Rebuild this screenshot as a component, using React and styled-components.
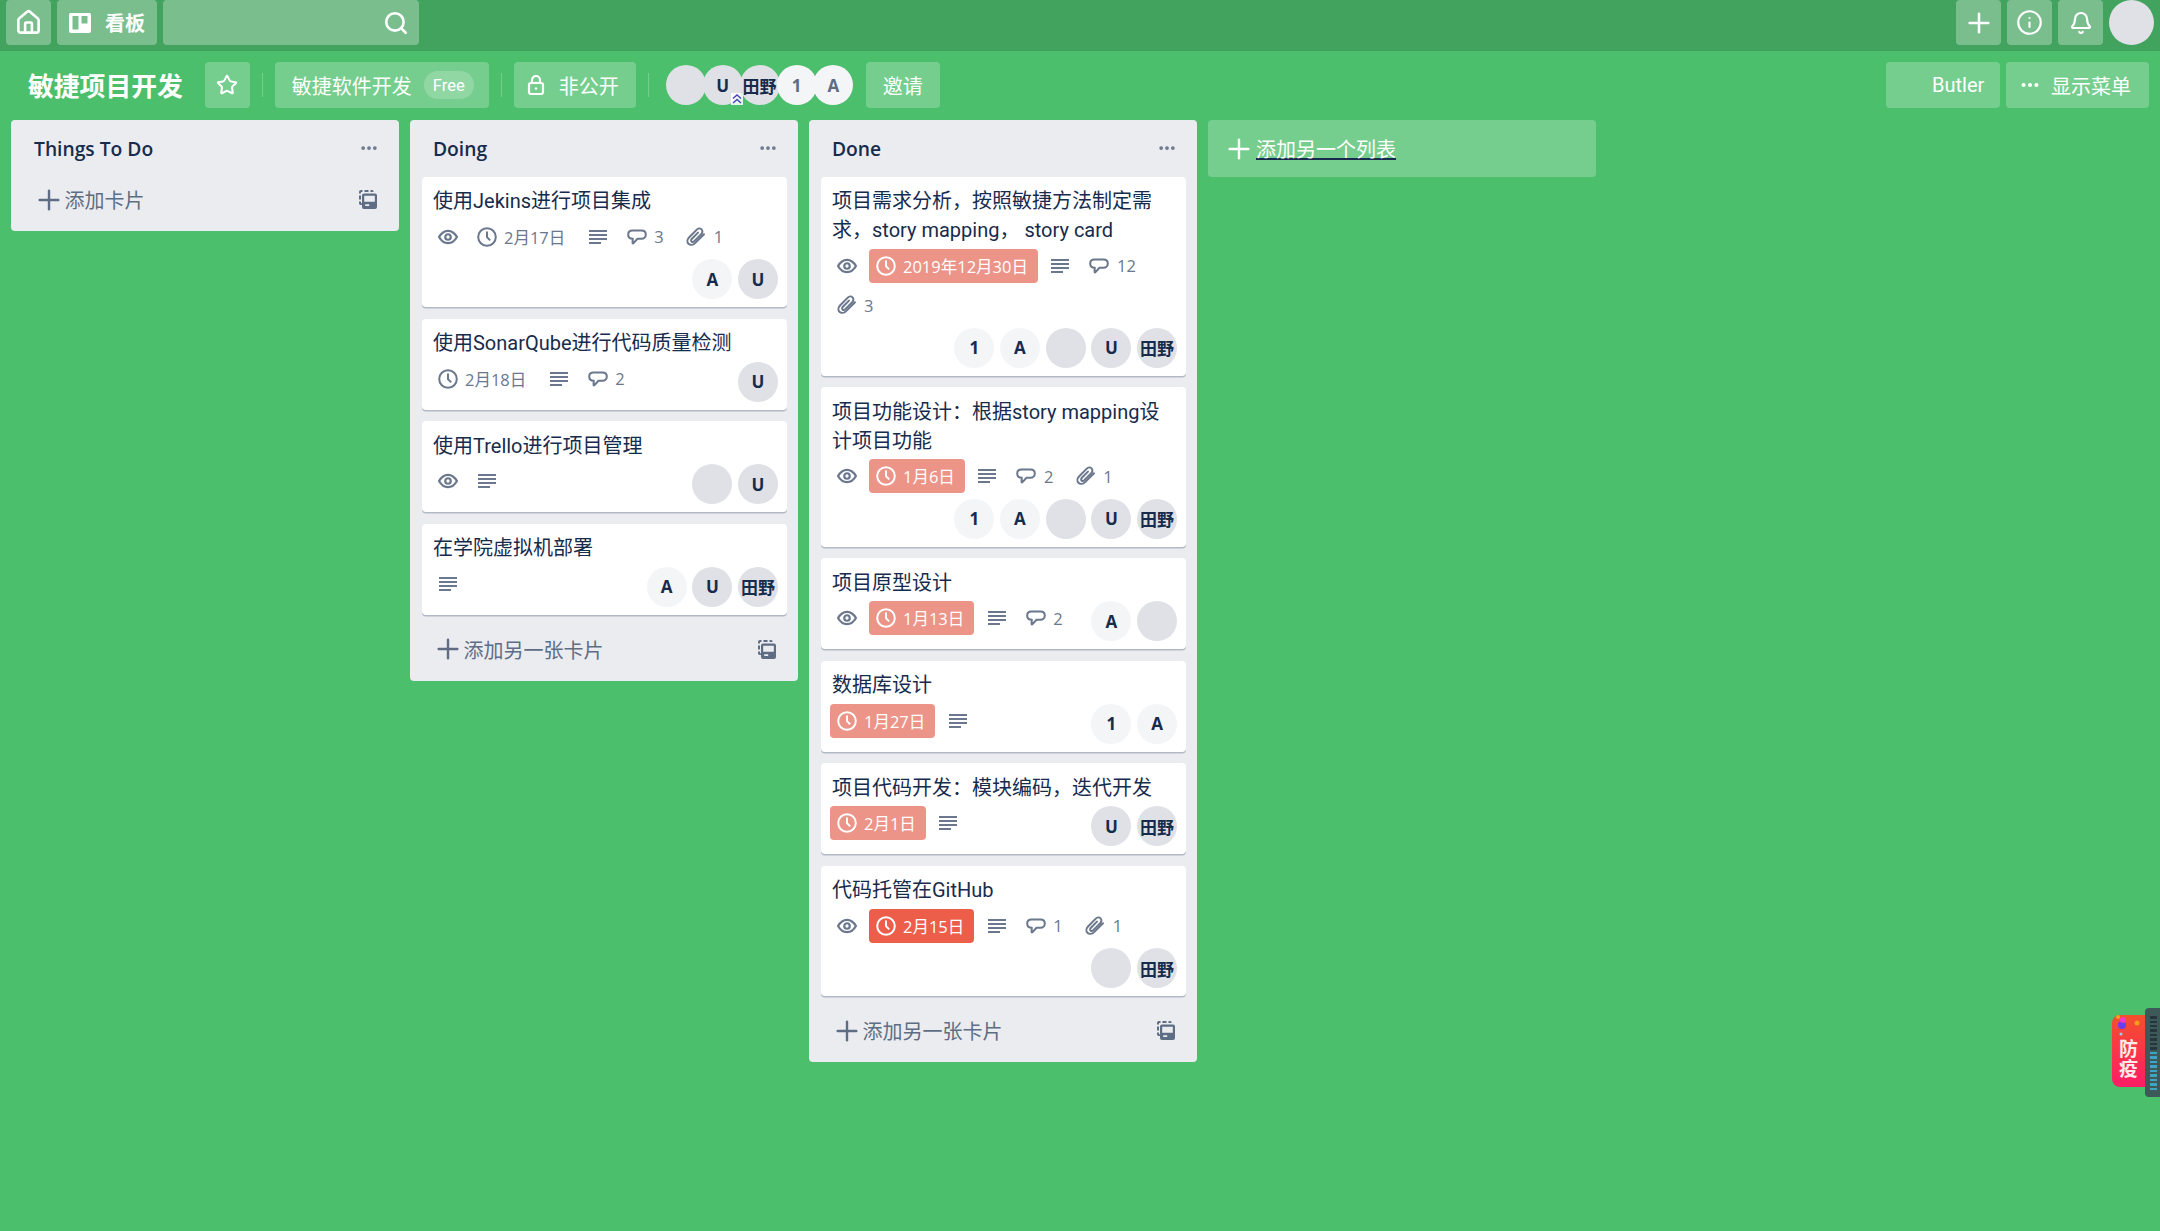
import React from 'react';
import styled, { createGlobalStyle } from 'styled-components';
import { Home, Search, Plus, Info, Bell, Star, MoreHorizontal } from 'lucide-react';

const GlobalStyle = createGlobalStyle`
  html, body {
    margin: 0;
    height: 100%;
    overflow: hidden;
    background: #4bbf6b;
    font-family: "Open Sans", "Noto Sans CJK SC", sans-serif;
    color: #172b4d;
  }
`;

const Page = styled.div`
  position: relative;
  height: 100vh;
  overflow: hidden;
  background: #4bbf6b;
`;

const TopBar = styled.header`
  display: flex;
  align-items: flex-start;
  justify-content: space-between;
  height: 51px;
  padding: 0 6px;
  box-sizing: border-box;
  background: #41a35e;
`;

const TopGroup = styled.div`
  display: flex;
  gap: 6px;
`;

const TopButton = styled.div`
  display: flex;
  align-items: center;
  justify-content: center;
  gap: 14px;
  width: ${(p) => p.$width || 45}px;
  height: 45px;
  border-radius: 4px;
  background: rgba(255, 255, 255, 0.3);
  color: #fff;
  font-size: 20px;
  font-weight: 700;
`;

const SearchBox = styled(TopButton)`
  justify-content: flex-end;
  padding-right: 10px;
  box-sizing: border-box;
`;

const Me = styled.div`
  width: 45px;
  height: 45px;
  border-radius: 50%;
  background: #dfe1e6;
`;

const BoardHeader = styled.div`
  display: flex;
  align-items: center;
  justify-content: space-between;
  padding: 11px 11px 12px 28px;
`;

const HeaderGroup = styled.div`
  display: flex;
  align-items: center;
`;

const BoardTitle = styled.h1`
  margin: 0 22px 0 0;
  font-size: 25.8px;
  font-weight: 700;
  color: #fff;
`;

const HeaderButton = styled.div`
  display: flex;
  align-items: center;
  justify-content: ${(p) => p.$justify || 'flex-start'};
  box-sizing: border-box;
  width: ${(p) => p.$width}px;
  height: 46px;
  padding-left: ${(p) => p.$pad || 0}px;
  margin-left: ${(p) => p.$left || 0}px;
  gap: ${(p) => p.$gap || 0}px;
  border-radius: 4px;
  background: rgba(255, 255, 255, 0.24);
  color: #fff;
  font-family: Roboto, "Noto Sans CJK SC", sans-serif;
  font-size: 20px;
`;

const Divider = styled.span`
  width: 1px;
  height: 24px;
  margin: 0 12px;
  background: rgba(255, 255, 255, 0.24);
`;

const Free = styled.span`
  display: flex;
  align-items: center;
  height: 28px;
  padding: 0 9px;
  margin-left: 12px;
  border-radius: 14px;
  background: rgba(255, 255, 255, 0.2);
  font-size: 16.5px;
`;

const HeaderAvatars = styled.div`
  display: flex;
  margin: 0 15.500px 0 5px;
`;

const HeaderAvatar = styled.div`
  position: relative;
  display: flex;
  align-items: center;
  justify-content: center;
  width: 40px;
  height: 40px;
  margin-right: -3.100px;
  border-radius: 50%;
  background: ${(p) => (p.$light ? '#f4f5f7' : '#dfe1e6')};
  color: ${(p) => (p.$light ? '#5e6c84' : '#172b4d')};
  font-size: 17px;
  font-weight: 700;
  white-space: nowrap;
`;

const AdminMark = styled.svg`
  position: absolute;
  right: 0;
  bottom: 0;
  width: 12px;
  height: 12px;
  background: rgba(255, 255, 255, 0.85);
`;

const Lists = styled.main`
  display: flex;
  align-items: flex-start;
  gap: 11px;
  padding-left: 11px;
`;

const List = styled.section`
  width: 388px;
  flex: none;
  box-sizing: border-box;
  padding: 0 11px 0 12px;
  border-radius: 4px;
  background: #ebecf0;
`;

const ListHeader = styled.div`
  display: flex;
  align-items: center;
  justify-content: space-between;
  height: 56.500px;
  padding: 0 9px 0 11px;
  box-sizing: border-box;
`;

const ListTitle = styled.h2`
  margin: 0;
  font-size: 19.25px;
  font-weight: 600;
`;

const Card = styled.article`
  margin-bottom: 11.5px;
  padding: 10.500px 9px 8px 9px;
  border-radius: 4px;
  background: #fff;
  box-shadow: 0 1.4px 0 rgba(9, 30, 66, 0.25);
`;

const CardTitle = styled.div`
  max-width: 335px;
  margin: 0 0 3.500px 2px;
  font-family: Roboto, "Noto Sans CJK SC", sans-serif;
  font-size: 20px;
  line-height: 29px;
`;

const CardFoot = styled.div`
  display: flex;
  flex-wrap: wrap;
  justify-content: space-between;
`;

const Badges = styled.div`
  display: flex;
  flex-wrap: wrap;
  column-gap: 6px;
  row-gap: 5.5px;
  padding-bottom: 5.5px;
  align-self: flex-start;
`;

const Badge = styled.div`
  display: flex;
  align-items: center;
  height: 34px;
  padding: 0 2px;
  border-radius: 4px;
  background: ${(p) => p.$bg || 'transparent'};
  color: ${(p) => (p.$bg ? '#fff' : '#6b778c')};
  font-size: 16.5px;
`;

const BadgeIcon = styled.span`
  display: flex;
  align-items: center;
  justify-content: center;
  width: 29px;
  height: 34px;
`;

const BadgeText = styled.span`
  padding: 0 8px 0 3px;
`;

const Members = styled.div`
  display: flex;
  gap: 5.7px;
  margin-left: auto;
`;

const Avatar = styled.div`
  display: flex;
  align-items: center;
  justify-content: center;
  width: 40px;
  height: 40px;
  border-radius: 50%;
  background: ${(p) => (p.$light ? '#f4f5f7' : '#dfe1e6')};
  font-size: 17px;
  font-weight: 700;
  white-space: nowrap;
`;

const ListFoot = styled.div`
  display: flex;
  align-items: center;
  height: 46px;
  margin-bottom: 8.500px;
  padding: 0 11px 0 9.500px;
  color: #5e6c84;
  font-size: 20px;
`;

const FootText = styled.span`
  flex: 1;
`;

const AddList = styled.div`
  display: flex;
  align-items: center;
  gap: 1px;
  width: 388px;
  height: 57px;
  padding-left: 15px;
  box-sizing: border-box;
  border-radius: 4px;
  background: rgba(255, 255, 255, 0.24);
  color: #fff;
  font-size: 20px;
`;

const AddLabel = styled.span`
  text-decoration: underline;
  text-decoration-color: #172b4d;
`;

const Widget = styled.aside`
  position: absolute;
  right: 0;
  top: 1008px;
  display: flex;
  align-items: flex-start;
`;

const Tag = styled.div`
  position: relative;
  width: 33px;
  height: 72px;
  margin-top: 7px;
  padding-top: 24px;
  box-sizing: border-box;
  border-radius: 8px 0 0 8px;
  background: linear-gradient(#f4502c, #ff1c66);
  color: #ffe9ea;
  font-size: 19px;
  font-weight: 700;
  line-height: 20px;
  text-align: center;
`;

const Sparkle = styled.svg`
  position: absolute;
  left: 0;
  top: -2px;
  width: 33px;
  height: 24px;
`;

const Meter = styled.div`
  display: flex;
  flex-direction: column;
  justify-content: flex-end;
  gap: 2px;
  width: 15px;
  height: 89px;
  padding: 8px 3px 7px 5px;
  box-sizing: border-box;
  border-radius: 4px 0 0 4px;
  background: #3e5a58;
`;

const Tick = styled.i`
  display: block;
  height: 3px;
  background: ${(p) => (p.$on ? '#3ea6c4' : '#26363a')};
`;

const Eye = () => (
  <svg width="20" height="16" viewBox="0 0 19 15" fill="none" stroke="currentColor" strokeWidth="2.100">
    <path d="M1 7.500C3.200 3.600 6 1.600 9.500 1.600S15.800 3.600 18 7.500c-2.200 3.900-5 5.900-8.500 5.900S3.200 11.400 1 7.500z" />
    <circle cx="9.500" cy="7.500" r="2.600" />
  </svg>
);

const Clock = () => (
  <svg width="20" height="20" viewBox="0 0 20 20" fill="none" stroke="currentColor" strokeWidth="2">
    <circle cx="10" cy="10" r="8.800" />
    <path d="M10 4.500v5.700l3.200 3.200" />
  </svg>
);

const Lines = () => (
  <svg width="18" height="14" viewBox="0 0 18 14" fill="currentColor">
    <rect width="18" height="2" />
    <rect y="4" width="18" height="2" />
    <rect y="8" width="18" height="2" />
    <rect y="12" width="12" height="2" />
  </svg>
);

const Bubble = () => (
  <svg width="20" height="16" viewBox="0 0 20 15.500" fill="none" stroke="currentColor" strokeWidth="2" strokeLinejoin="round">
    <path d="M5.500 1.200h9c2.500 0 4.300 1.600 4.300 4s-1.800 4.300-4.300 4.300H10.500l-4 4.400c-.5.500-1.100.2-1-.5l.3-3.900C3 9.500 1.200 7.800 1.200 5.200s1.800-4 4.300-4z" />
  </svg>
);

const Clip = () => (
  <svg width="20" height="20" viewBox="0 0 18 18" fill="none" stroke="currentColor" strokeWidth="1.800" strokeLinecap="round">
    <path d="M16.200 6.500 8.200 14.500c-1.900 1.900-4.600 2-6 .6S1 11.100 2.900 9.200l6.800-6.800c1.300-1.300 3.200-1.400 4.300-.3s1 3-.3 4.300L7.400 12.700c-.8.800-1.800.9-2.400.3s-.5-1.600.3-2.400l5.500-5.500" />
  </svg>
);

const Template = () => (
  <svg width="18" height="19" viewBox="0 0 18 19" fill="currentColor">
    <path d="M0 3.500V2a2 2 0 0 1 2-2h1.500v2H2v1.500zM5.500 0h4v2h-4zM11.500 0H13a2 2 0 0 1 1.500.7v1.300h-3zM0 5.500h2v4H0zM0 11.500h2V13l1 .5v1.300A2 2 0 0 1 0 13z" />
    <path d="M5 3.500h11a2 2 0 0 1 2 2V17a2 2 0 0 1-2 2H5a2 2 0 0 1-2-2V5.500a2 2 0 0 1 2-2zm.2 2.200v6.100h10.600V5.700zm1 8.600v1.700h4v-1.700z" fillRule="evenodd" />
  </svg>
);

const BoardIcon = () => (
  <svg width="22" height="20" viewBox="0 0 22 20" fill="#fff">
    <path d="M2 0h18a2 2 0 0 1 2 2v16a2 2 0 0 1-2 2H2a2 2 0 0 1-2-2V2a2 2 0 0 1 2-2zm1.500 3v13.500h6V3zm9 0v7.500h6V3z" fillRule="evenodd" />
  </svg>
);

const LockIcon = () => (
  <svg width="18" height="20" viewBox="0 0 18 20" fill="none" stroke="#fff" strokeWidth="2.200">
    <rect x="2" y="8" width="14" height="11" rx="2" />
    <path d="M5 8V5a4 4 0 0 1 8 0v3" />
    <circle cx="9" cy="13.500" r="1.200" fill="#fff" stroke="none" />
  </svg>
);

const columns = [
  { name: 'Things To Do', add: '添加卡片', cards: [] },
  {
    name: 'Doing',
    add: '添加另一张卡片',
    cards: [
      { title: '使用Jekins进行项目集成', eye: true, date: '2月17日', desc: true, comments: 3, clips: 1, members: ['A', 'U'] },
      { title: '使用SonarQube进行代码质量检测', date: '2月18日', desc: true, comments: 2, members: ['U'] },
      { title: '使用Trello进行项目管理', eye: true, desc: true, members: ['', 'U'] },
      { title: '在学院虚拟机部署', desc: true, members: ['A', 'U', '田野'] },
    ],
  },
  {
    name: 'Done',
    add: '添加另一张卡片',
    cards: [
      { title: '项目需求分析，按照敏捷方法制定需求，story mapping， story card', eye: true, date: '2019年12月30日', tone: '#ec9488', desc: true, comments: 12, clips: 3, members: ['1', 'A', '', 'U', '田野'] },
      { title: '项目功能设计：根据story mapping设计项目功能', eye: true, date: '1月6日', tone: '#ec9488', desc: true, comments: 2, clips: 1, members: ['1', 'A', '', 'U', '田野'] },
      { title: '项目原型设计', eye: true, date: '1月13日', tone: '#ec9488', desc: true, comments: 2, members: ['A', ''] },
      { title: '数据库设计', date: '1月27日', tone: '#ec9488', desc: true, members: ['1', 'A'] },
      { title: '项目代码开发：模块编码，迭代开发', date: '2月1日', tone: '#ec9488', desc: true, members: ['U', '田野'] },
      { title: '代码托管在GitHub', eye: true, date: '2月15日', tone: '#ec5d4a', desc: true, comments: 1, clips: 1, members: ['', '田野'] },
    ],
  },
];

const isLight = (m) => m === '1' || m === 'A';

function TaskCard({ card }) {
  return (
    <Card>
      <CardTitle>{card.title}</CardTitle>
      <CardFoot>
        <Badges>
          {card.eye && <Badge><BadgeIcon><Eye /></BadgeIcon></Badge>}
          {card.date && (
            <Badge $bg={card.tone}>
              <BadgeIcon><Clock /></BadgeIcon>
              <BadgeText>{card.date}</BadgeText>
            </Badge>
          )}
          {card.desc && <Badge><BadgeIcon><Lines /></BadgeIcon></Badge>}
          {card.comments && (
            <Badge>
              <BadgeIcon><Bubble /></BadgeIcon>
              <BadgeText>{card.comments}</BadgeText>
            </Badge>
          )}
          {card.clips && (
            <Badge>
              <BadgeIcon><Clip /></BadgeIcon>
              <BadgeText>{card.clips}</BadgeText>
            </Badge>
          )}
        </Badges>
        <Members>
          {card.members.map((m, i) => (
            <Avatar key={i} $light={isLight(m)}>{m}</Avatar>
          ))}
        </Members>
      </CardFoot>
    </Card>
  );
}

export default function App() {
  return (
    <Page>
      <GlobalStyle />
      <TopBar>
        <TopGroup>
          <TopButton><Home size={27} strokeWidth={2.300} /></TopButton>
          <TopButton $width={100}><BoardIcon />看板</TopButton>
          <SearchBox $width={256}><Search size={26} strokeWidth={2.400} /></SearchBox>
        </TopGroup>
        <TopGroup>
          <TopButton><Plus size={32} strokeWidth={1.900} /></TopButton>
          <TopButton><Info size={27} strokeWidth={1.900} /></TopButton>
          <TopButton><Bell size={24} strokeWidth={2.200} /></TopButton>
          <Me />
        </TopGroup>
      </TopBar>

      <BoardHeader>
        <HeaderGroup>
          <BoardTitle>敏捷项目开发</BoardTitle>
          <HeaderButton $width={45} $justify="center"><Star size={22} strokeWidth={2.200} /></HeaderButton>
          <Divider />
          <HeaderButton $width={214} $pad={17}>敏捷软件开发<Free>Free</Free></HeaderButton>
          <Divider />
          <HeaderButton $width={122} $pad={13} $gap={14}><LockIcon />非公开</HeaderButton>
          <Divider />
          <HeaderAvatars>
            <HeaderAvatar />
            <HeaderAvatar>
              U
              <AdminMark viewBox="0 0 12 12" fill="none" stroke="#4a3fc4" strokeWidth="1.400">
                <path d="M2 5.500 6 2l4 3.500M2 10 6 6.500 10 10" />
              </AdminMark>
            </HeaderAvatar>
            <HeaderAvatar>田野</HeaderAvatar>
            <HeaderAvatar $light>1</HeaderAvatar>
            <HeaderAvatar $light>A</HeaderAvatar>
          </HeaderAvatars>
          <HeaderButton $width={74} $justify="center">邀请</HeaderButton>
        </HeaderGroup>
        <HeaderGroup>
          <HeaderButton $width={114} $pad={46}>Butler</HeaderButton>
          <HeaderButton $width={143} $pad={13} $gap={10} $left={6}>
            <MoreHorizontal size={22} strokeWidth={2.500} />显示菜单
          </HeaderButton>
        </HeaderGroup>
      </BoardHeader>

      <Lists>
        {columns.map((col) => (
          <List key={col.name}>
            <ListHeader>
              <ListTitle>{col.name}</ListTitle>
              <MoreHorizontal size={20} color="#6b778c" strokeWidth={2.500} />
            </ListHeader>
            {col.cards.map((card) => (
              <TaskCard key={card.title} card={card} />
            ))}
            <ListFoot>
              <Plus size={32} strokeWidth={1.800} />
              <FootText>{col.add}</FootText>
              <Template />
            </ListFoot>
          </List>
        ))}
        <AddList>
          <Plus size={32} strokeWidth={1.800} />
          <AddLabel>添加另一个列表</AddLabel>
        </AddList>
      </Lists>

      <Widget>
        <Tag>
          <Sparkle viewBox="0 0 33 24">
            <circle cx="10" cy="12" r="4" fill="#6a3df0" />
            <circle cx="11" cy="7" r="3" fill="#f03bc0" />
            <circle cx="6" cy="4" r="2" fill="#f7a020" />
            <circle cx="25" cy="10" r="2.500" fill="#f79a20" />
            <circle cx="9" cy="21" r="1.500" fill="#9ad0e0" />
          </Sparkle>
          防疫
        </Tag>
        <Meter>
          {Array.from({ length: 17 }, (_, i) => (
            <Tick key={i} $on={i > 7} />
          ))}
        </Meter>
      </Widget>
    </Page>
  );
}
